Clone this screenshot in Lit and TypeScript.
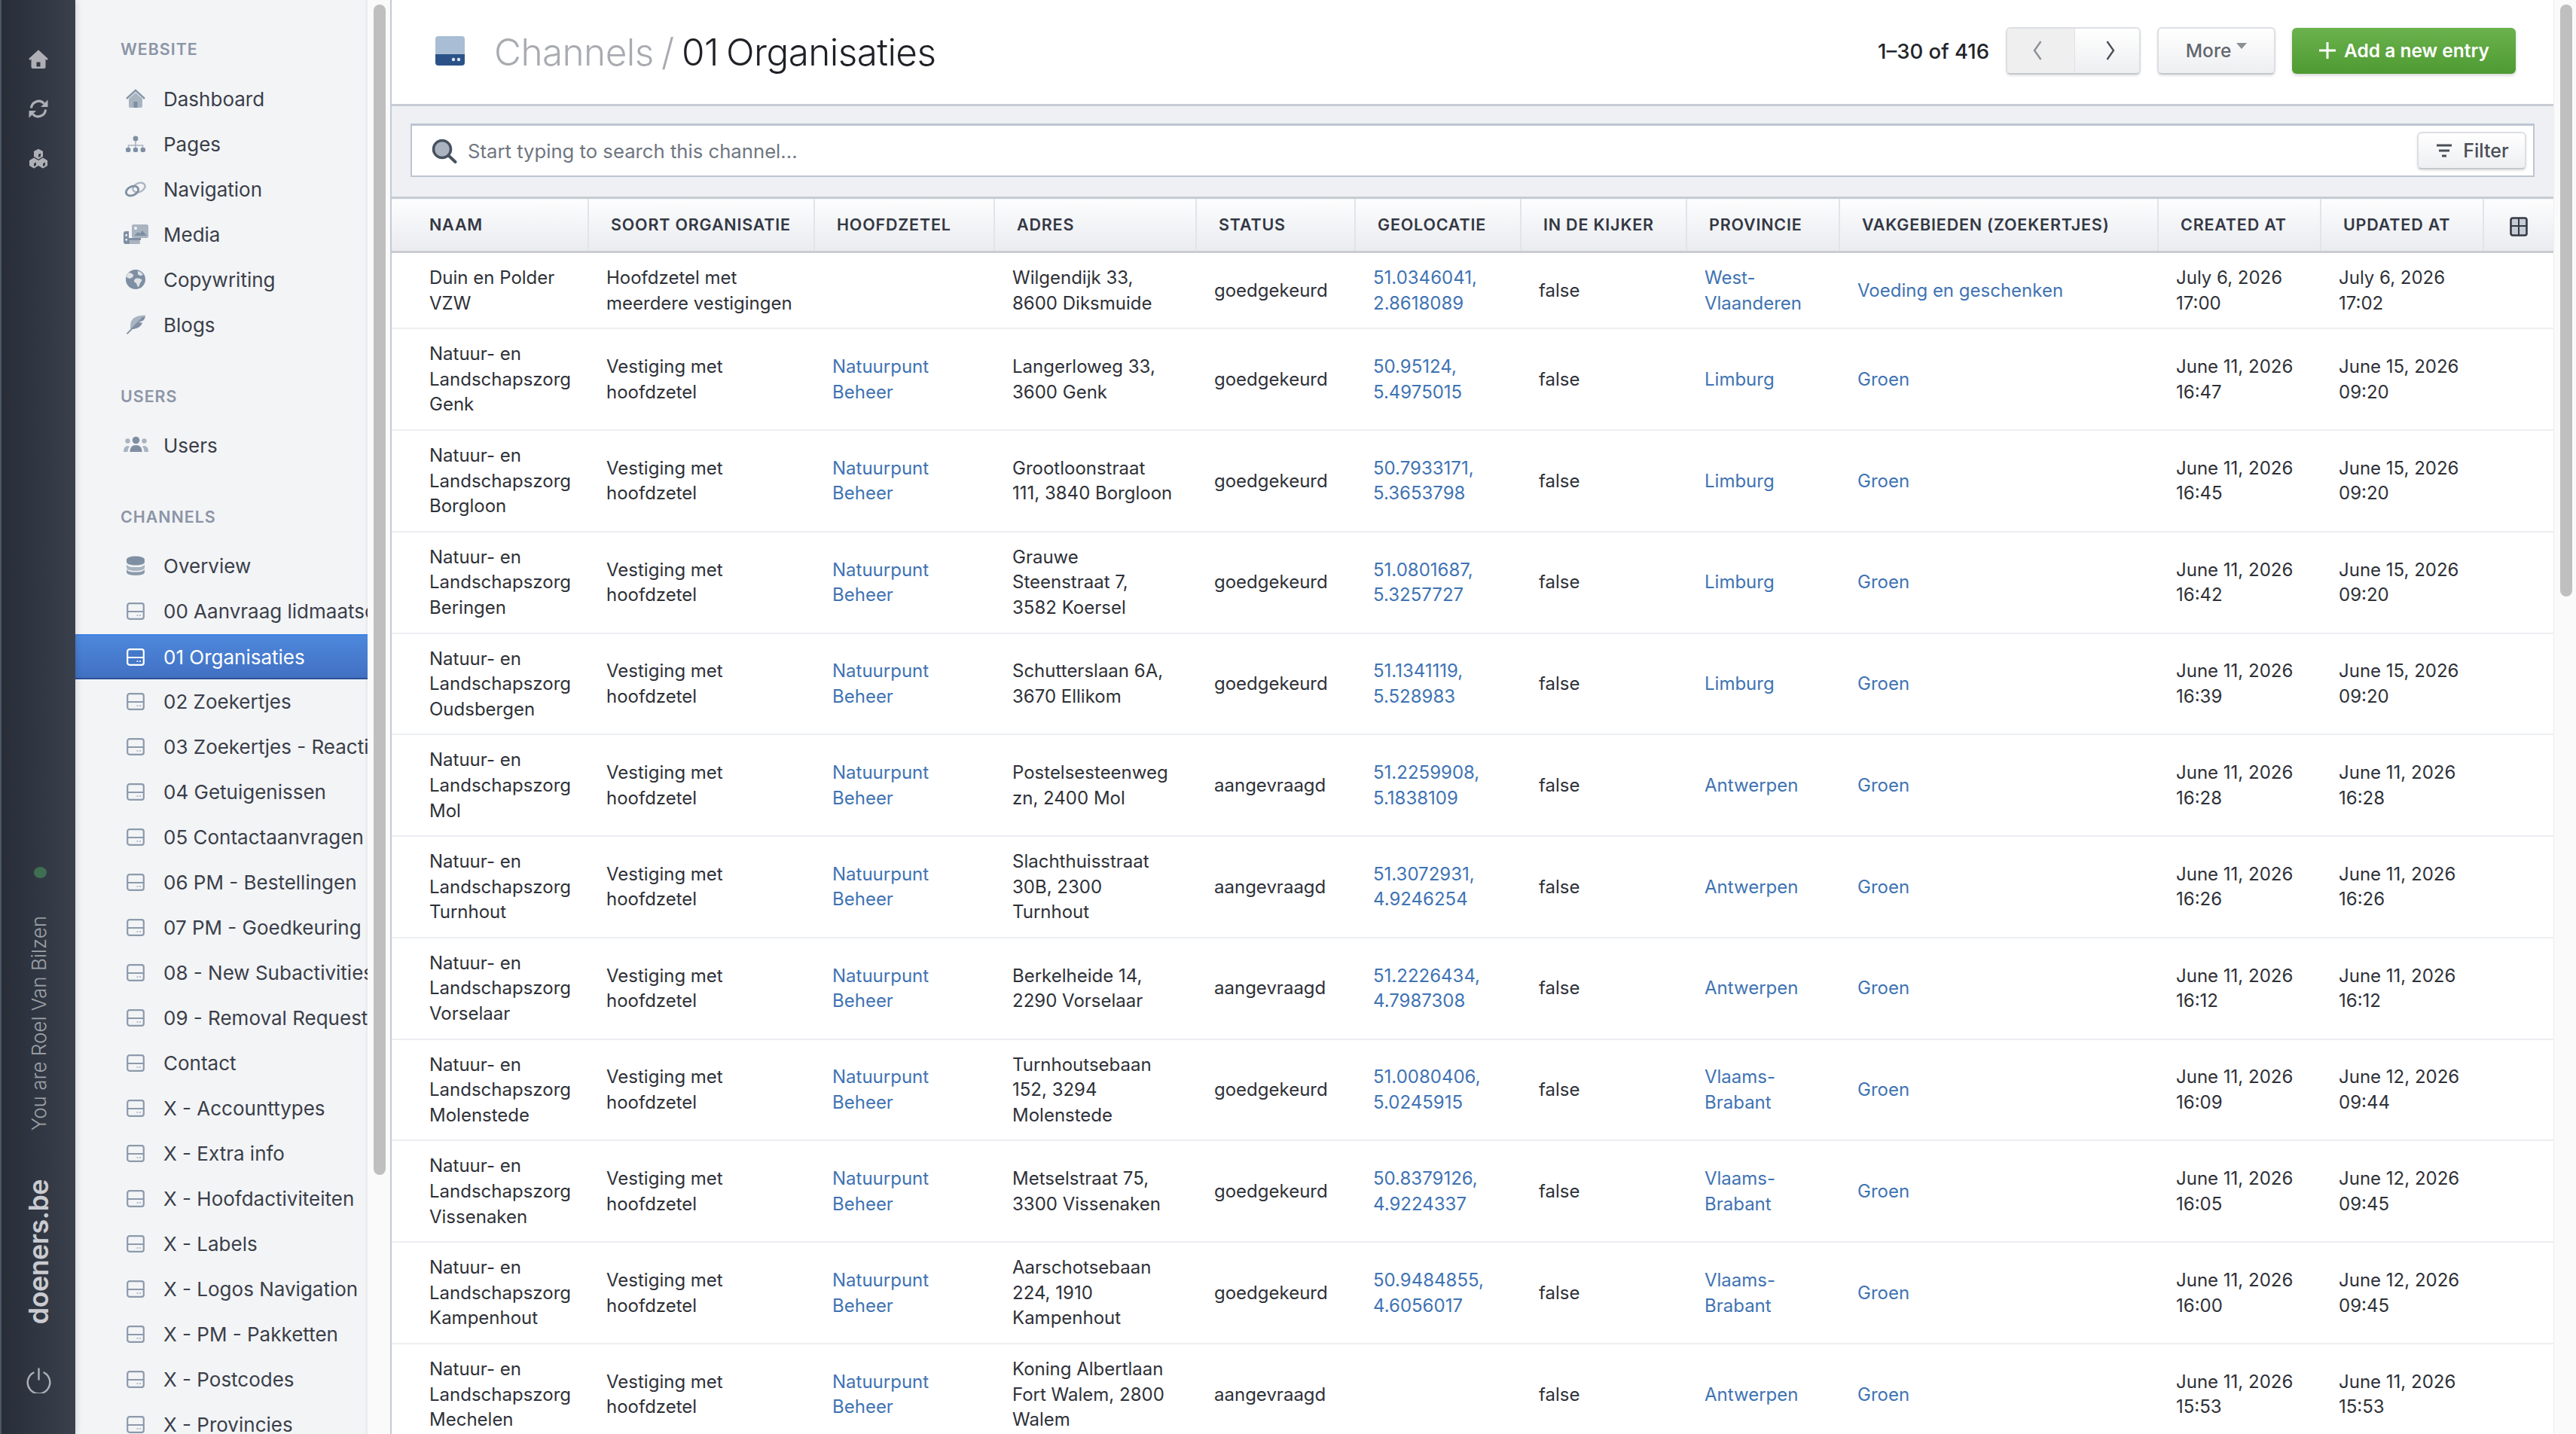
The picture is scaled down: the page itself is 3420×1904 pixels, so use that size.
import { LitElement, html, css } from "lit";
import { customElement } from "lit/decorators.js";

type Row = { name: string; soort: string; hoofd: string; adres: string; status: string; geo: string; prov: string; vak: string; created: string; updated: string };

const NP = "Natuurpunt\nBeheer";
const VM = "Vestiging met\nhoofdzetel";
const L = "Natuur- en\nLandschapszorg\n";
const rows: Row[] = [
  { name: "Duin en Polder\nVZW", soort: "Hoofdzetel met\nmeerdere vestigingen", hoofd: "", adres: "Wilgendijk 33,\n8600 Diksmuide", status: "goedgekeurd", geo: "51.0346041,\n2.8618089", prov: "West-\nVlaanderen", vak: "Voeding en geschenken", created: "July 6, 2026\n17:00", updated: "July 6, 2026\n17:02" },
  { name: L + "Genk", soort: VM, hoofd: NP, adres: "Langerloweg 33,\n3600 Genk", status: "goedgekeurd", geo: "50.95124,\n5.4975015", prov: "Limburg", vak: "Groen", created: "June 11, 2026\n16:47", updated: "June 15, 2026\n09:20" },
  { name: L + "Borgloon", soort: VM, hoofd: NP, adres: "Grootloonstraat\n111, 3840 Borgloon", status: "goedgekeurd", geo: "50.7933171,\n5.3653798", prov: "Limburg", vak: "Groen", created: "June 11, 2026\n16:45", updated: "June 15, 2026\n09:20" },
  { name: L + "Beringen", soort: VM, hoofd: NP, adres: "Grauwe\nSteenstraat 7,\n3582 Koersel", status: "goedgekeurd", geo: "51.0801687,\n5.3257727", prov: "Limburg", vak: "Groen", created: "June 11, 2026\n16:42", updated: "June 15, 2026\n09:20" },
  { name: L + "Oudsbergen", soort: VM, hoofd: NP, adres: "Schutterslaan 6A,\n3670 Ellikom", status: "goedgekeurd", geo: "51.1341119,\n5.528983", prov: "Limburg", vak: "Groen", created: "June 11, 2026\n16:39", updated: "June 15, 2026\n09:20" },
  { name: L + "Mol", soort: VM, hoofd: NP, adres: "Postelsesteenweg\nzn, 2400 Mol", status: "aangevraagd", geo: "51.2259908,\n5.1838109", prov: "Antwerpen", vak: "Groen", created: "June 11, 2026\n16:28", updated: "June 11, 2026\n16:28" },
  { name: L + "Turnhout", soort: VM, hoofd: NP, adres: "Slachthuisstraat\n30B, 2300\nTurnhout", status: "aangevraagd", geo: "51.3072931,\n4.9246254", prov: "Antwerpen", vak: "Groen", created: "June 11, 2026\n16:26", updated: "June 11, 2026\n16:26" },
  { name: L + "Vorselaar", soort: VM, hoofd: NP, adres: "Berkelheide 14,\n2290 Vorselaar", status: "aangevraagd", geo: "51.2226434,\n4.7987308", prov: "Antwerpen", vak: "Groen", created: "June 11, 2026\n16:12", updated: "June 11, 2026\n16:12" },
  { name: L + "Molenstede", soort: VM, hoofd: NP, adres: "Turnhoutsebaan\n152, 3294\nMolenstede", status: "goedgekeurd", geo: "51.0080406,\n5.0245915", prov: "Vlaams-\nBrabant", vak: "Groen", created: "June 11, 2026\n16:09", updated: "June 12, 2026\n09:44" },
  { name: L + "Vissenaken", soort: VM, hoofd: NP, adres: "Metselstraat 75,\n3300 Vissenaken", status: "goedgekeurd", geo: "50.8379126,\n4.9224337", prov: "Vlaams-\nBrabant", vak: "Groen", created: "June 11, 2026\n16:05", updated: "June 12, 2026\n09:45" },
  { name: L + "Kampenhout", soort: VM, hoofd: NP, adres: "Aarschotsebaan\n224, 1910\nKampenhout", status: "goedgekeurd", geo: "50.9484855,\n4.6056017", prov: "Vlaams-\nBrabant", vak: "Groen", created: "June 11, 2026\n16:00", updated: "June 12, 2026\n09:45" },
  { name: L + "Mechelen", soort: VM, hoofd: NP, adres: "Koning Albertlaan\nFort Walem, 2800\nWalem", status: "aangevraagd", geo: "", prov: "Antwerpen", vak: "Groen", created: "June 11, 2026\n15:53", updated: "June 11, 2026\n15:53" },
];

const heads = ["Naam", "Soort organisatie", "Hoofdzetel", "Adres", "Status", "Geolocatie", "In de kijker", "Provincie", "Vakgebieden (zoekertjes)", "Created at", "Updated at"];
const widths = [261, 300, 239, 268, 211, 220, 220, 203, 423, 216, 216, 93];

const websiteIcons: Record<string, unknown> = {
  Dashboard: html`<svg class="ic" viewBox="0 0 26 26"><path fill="#a9b4c1" d="M13 5 4 13v10a2 2 0 0 0 2 2h14a2 2 0 0 0 2-2V13z"/><path fill="none" stroke="#8796a8" stroke-width="2.4" d="M1 13 13 2l12 11"/><rect x="10.5" y="17" width="5" height="8" fill="#7f8ea1"/></svg>`,
  Pages: html`<svg class="ic" viewBox="0 0 26 26"><circle cx="13" cy="6" r="3.4" fill="#7f8fa3"/><path fill="none" stroke="#a9b4c1" stroke-width="1.6" d="M3.5 19v-4h19v4M13 9v10"/><rect y="18" width="6.4" height="6" rx="2" fill="#7f8fa3"/><rect x="9.8" y="18" width="6.4" height="6" rx="2" fill="#7f8fa3"/><rect x="19.6" y="18" width="6.4" height="6" rx="2" fill="#7f8fa3"/></svg>`,
  Navigation: html`<svg class="ic wide" viewBox="0 0 30 26"><ellipse cx="19.5" cy="11" rx="8.5" ry="5.8" transform="rotate(-25 19.5 11)" fill="none" stroke="#aab5c2" stroke-width="2.4"/><ellipse cx="10.5" cy="15.5" rx="8.5" ry="5.8" transform="rotate(-25 10.5 15.5)" fill="none" stroke="#7f8fa3" stroke-width="2.8"/></svg>`,
  Media: html`<svg class="ic wider" viewBox="0 0 33 26"><rect x="11" y="0" width="22" height="18" rx="2.5" fill="#a9b4c1"/><circle cx="16" cy="5" r="2" fill="#f3f4f6"/><path fill="#7f8fa3" d="m14 15 5-5 3 2 3-4 6 7z"/><path fill="#7f8fa3" d="M3 9h4v9h16v3H8v5H3a3 3 0 0 1-3-3V12a3 3 0 0 1 3-3z"/><rect x="8" y="21" width="14" height="5" rx="1.5" fill="#a9b4c1"/><rect x="2.5" y="13" width="2.5" height="2.5" fill="#f3f4f6"/><rect x="2.5" y="19" width="2.5" height="2.5" fill="#f3f4f6"/></svg>`,
  Copywriting: html`<svg class="ic" viewBox="0 0 26 26"><circle cx="13" cy="13" r="13" fill="#7f8fa3"/><path fill="#dfe3e8" d="M4 4c3 0 4 1 5 2 2 1 1 3 0 4-2 1-3 2-4 2L1 10c0-2 1-4 3-6zM13 12c3-1 6 0 8 1 1 2-1 3-2 5l-2 5c-2 0-2-3-3-5-1-1-3-1-3-3s1-2 2-3zM16 2c3 0 6 3 7 5l-3 1c-2 0-3-1-4-2z"/></svg>`,
  Blogs: html`<svg class="ic" viewBox="0 0 26 26"><path fill="#a9b4c1" d="M25.5.5C15 .5 8 4 6.5 11l-.6 7.5 7.1-.5c4 0 7.500-3 9-7l-5.500-.5 7-3c1.500-2.500 2.500-5 2.500-7.500z"/><path fill="#7f8fa3" d="M22 3 1 24.500 2 26l7-7c1-.1 3-.2 4-.8 4-1 7-4 9-7.700l-5.500-.5 7-3c1-1.500 2-3 2.300-4.500z"/></svg>`,
  Users: html`<svg class="ic wider" viewBox="0 0 33 24"><circle cx="5.500" cy="6.500" r="3.200" fill="#a9b4c1"/><circle cx="27.500" cy="6.500" r="3.200" fill="#a9b4c1"/><path fill="#a9b4c1" d="M0 21c0-5 2-8 6-8l2 1c-2 2-2.500 5-2.500 7zM33 21c0-5-2-8-6-8l-2 1c2 2 2.500 5 2.500 7z"/><circle cx="16.500" cy="5.500" r="4.800" fill="#7f8fa3"/><path fill="#7f8fa3" d="M8.500 21c0-6 3-9 8-9s8 3 8 9z"/></svg>`,
  Overview: html`<svg class="ic" viewBox="0 0 26 26"><ellipse cx="13" cy="5" rx="12" ry="4.500" fill="#7f8fa3"/><path fill="#7f8fa3" d="M1 5v3c0 3 5 4.500 12 4.500S25 11 25 8V5c-2 3-6 4-12 4S3 8 1 5z"/><path fill="#a9b4c1" d="M1 11.500v4c0 3 5 4.500 12 4.500s12-1.500 12-4.500v-4c-2 3-6 3.500-12 3.500S3 14.500 1 11.500z"/><path fill="#8a99ab" d="M1 18v3.500C1 24.500 6 26 13 26s12-1.500 12-4.500V18c-2 3-6 3.500-12 3.500S3 21 1 18z"/></svg>`,
};

const channelIcon = (active: boolean) => html`<svg class="ic chan" viewBox="0 0 24 23">
  <rect x="1.200" y="1.200" width="21.600" height="20.600" rx="2.800" fill=${active ? "#4478c8" : "none"} stroke=${active ? "#fff" : "#8c9aac"} stroke-width="2.200"/>
  <path d="M1.500 12h21" stroke=${active ? "#fff" : "#8c9aac"} stroke-width="2"/>
  ${active ? html`<rect x="2.400" y="13" width="19.200" height="7.600" fill="#2a4f94"/>` : ""}
  <circle cx="14.500" cy="17" r="1.100" fill=${active ? "#fff" : "#a9b4c1"}/><circle cx="18" cy="17" r="1.100" fill=${active ? "#fff" : "#a9b4c1"}/>
</svg>`;

const channels = ["00 Aanvraag lidmaatschap", "01 Organisaties", "02 Zoekertjes", "03 Zoekertjes - Reacties", "04 Getuigenissen", "05 Contactaanvragen", "06 PM - Bestellingen", "07 PM - Goedkeuring aanvragen", "08 - New Subactivities", "09 - Removal Requests", "Contact", "X - Accounttypes", "X - Extra info", "X - Hoofdactiviteiten", "X - Labels", "X - Logos Navigation", "X - PM - Pakketten", "X - Postcodes", "X - Provincies"];

@customElement("app-root")
export class AppRoot extends LitElement {
  static styles = css`
    :host { display: flex; width: 3420px; height: 1904px; overflow: hidden; background: #fff; font-family: Inter, "Noto Sans", sans-serif; color: #2b2e35; }
    * { box-sizing: border-box; }
    .rail { width: 100px; height: 1904px; flex: none; display: flex; flex-direction: column; align-items: center; padding: 65px 0 54px; background: linear-gradient(90deg, #282d38, #3a414c); border-left: 2px solid #4e5766; color: #aeb0b6; box-shadow: 2px 0 8px rgba(0,0,0,.12); position: relative; z-index: 2; }
    .rail-ic { width: 26px; height: 27px; margin-bottom: 39px; display: block; }
    .spacer { flex: 1; }
    .dot { width: 17px; height: 15px; border-radius: 50%; background: #3f6f52; margin-left: 4px; flex: none; }
    .vert { writing-mode: vertical-rl; transform: rotate(180deg); white-space: nowrap; flex: none; }
    .you { font-size: 26px; font-weight: 300; color: #9ea2a9; margin-top: 50px; }
    .brand { font-size: 35.800px; font-weight: 600; color: #c9cbd0; margin-top: 65px; letter-spacing: -.5px; }
    .power { width: 33px; height: 34px; margin-top: 58px; flex: none; }

    .side { width: 388px; height: 1904px; flex: none; background: #f3f4f6; overflow: hidden; padding-top: 50px; box-shadow: inset -4px 0 3px -2px #e6e8eb; }
    .h { font-size: 21.400px; line-height: 30px; font-weight: 600; letter-spacing: 1px; color: #8b95a7; padding-left: 60px; margin: 49px 0 21px; text-transform: uppercase; }
    .h.first { margin-top: 0; margin-bottom: 22px; }
    .item { height: 60px; display: flex; align-items: center; white-space: nowrap; overflow: hidden; font-size: 26px; color: #3a3f4a; padding-bottom: 2px; }
    .item .slot { width: 117px; padding: 0 17px 0 60px; flex: none; display: flex; justify-content: center; }
    .item.on { background: linear-gradient(180deg, #4d88dc, #4270c2); border-top: 2px solid #3f83e4; border-bottom: 2px solid #2a4f94; color: #fff; padding-bottom: 0; }
    .ic { width: 26px; height: 26px; flex: none; display: block; }
    .ic.wide { width: 30px; }
    .ic.wider { width: 33px; }
    .ic.chan { width: 24px; height: 23px; }

    .track { width: 30px; flex: none; height: 1904px; background: #fafafa; padding: 6px 6px 0 8px; }
    .thumb { width: 16px; background: #bfbfbf; border-radius: 8px; }
    .track.s .thumb { height: 1554px; }
    .track.m { border-left: 1px solid #eceef0; }
    .track.m .thumb { height: 786px; }

    .main { width: 2872px; flex: none; height: 1904px; border-left: 2px solid #c3cad6; overflow: hidden; display: flex; flex-direction: column; }
    .top { height: 141px; flex: none; border-bottom: 3px solid #c7ccd4; display: flex; align-items: center; padding: 0 50px 4px 58px; }
    .logo { width: 39px; height: 39px; margin-right: 39px; flex: none; }
    .title { font-size: 49.500px; font-weight: 300; letter-spacing: -.6px; word-spacing: -3px; color: #a8abb0; flex: 1; white-space: nowrap; padding-top: 4px; }
    .title b { font-weight: 300; color: #1e2026; }
    .count { font-size: 27.500px; font-weight: 500; color: #22252b; margin-right: 22px; white-space: nowrap; padding-top: 1px; }
    .btn { height: 63px; display: flex; align-items: center; justify-content: center; border: 2px solid #dcdfe3; border-bottom-color: #c4c8ce; border-radius: 6px; background: linear-gradient(180deg, #fff, #eeeff1); box-shadow: 0 2px 3px rgba(0,0,0,.1); font-size: 24.500px; font-weight: 500; color: #62666e; white-space: nowrap; }
    .pager { width: 179px; padding: 0; overflow: hidden; align-items: stretch; margin-right: 22px; }
    .pager span { flex: 1; display: flex; align-items: center; justify-content: center; padding-left: 8px; border-left: 1px solid #dfe1e4; }
    .pager .off { background: #efefef; flex: none; width: 89px; color: #8b8f96; padding: 0 10px 0 0; border-left: none; }
    .pager svg { width: 12px; height: 26px; }
    .more { width: 157px; margin-right: 22px; gap: 7px; }
    .caret { width: 0; height: 0; border-left: 7px solid transparent; border-right: 7px solid transparent; border-top: 8px solid #8a8e95; margin-top: -12px; }
    .add { width: 297px; height: 61px; border: none; background: linear-gradient(180deg, #6ab24d, #4f9a32); color: #fff; font-weight: 600; gap: 10px; box-shadow: 0 2px 4px rgba(0,0,0,.18); }
    .add svg { width: 24px; height: 24px; }

    .searchbar { height: 120px; flex: none; background: #eef0f4; padding: 23px 25px 26px; }
    .box { height: 71px; background: #fff; border: 2px solid #bdc5d1; border-top-width: 3px; display: flex; align-items: center; padding: 0 9px 0 26px; }
    .box .mag { width: 34px; height: 33px; margin-right: 14px; flex: none; }
    .ph { flex: 1; font-size: 25.700px; color: #6f7680; white-space: nowrap; }
    .filter { width: 145px; height: 50px; gap: 14px; font-size: 25px; color: #4a4e56; padding-left: 2px; }
    .filter svg { width: 22px; height: 18px; }

    table { border-collapse: collapse; table-layout: fixed; width: 2870px; flex: none; }
    th { height: 72px; padding: 0 0 2px 29px; text-align: left; font-size: 21.500px; font-weight: 600; letter-spacing: .8px; text-transform: uppercase; color: #333844; background: linear-gradient(180deg, #fdfdfe, #e9ebef); border-top: 3px solid #c7ccd4; border-bottom: 3px solid #c9ccd1; border-left: 2px solid #e2e4e8; white-space: nowrap; overflow: hidden; }
    th:first-child { border-left: none; padding-left: 50px; }
    th svg { width: 24px; height: 26px; display: block; margin-top: 6px; margin-left: 5px; }
    td { padding: 16px 0 16px 24px; font-size: 24px; line-height: 33.600px; font-weight: 400; color: #2e3138; white-space: pre; border-bottom: 2px solid #eceef1; vertical-align: middle; }
    td:first-child { padding-left: 50px; }
    td.l { color: #3f73b3; }
  `;

  private item(label: string, icon: unknown, on = false) {
    return html`<div class="item ${on ? "on" : ""}"><span class="slot">${icon}</span>${label}</div>`;
  }

  render() {
    return html`
      <nav class="rail">
        <svg class="rail-ic" viewBox="0 0 26 26"><path fill="currentColor" d="M13 .8 25.800 12.500 24.300 14.600 22.500 13V23a2.500 2.500 0 0 1-2.500 2.500H6A2.500 2.500 0 0 1 3.500 23V13L1.700 14.600.2 12.500z"/><rect x="10.500" y="17" width="5" height="6" fill="#323843"/></svg>
        <svg class="rail-ic" viewBox="0 0 26 26"><path fill="none" stroke="currentColor" stroke-width="3.200" d="M3.500 12a9.800 9.800 0 0 1 17-6M22.500 14a9.800 9.800 0 0 1-17 6"/><path fill="currentColor" d="M25.500 1v9.500H16zM.5 25v-9.500H10z"/></svg>
        <svg class="rail-ic" viewBox="0 0 26 26"><g fill="currentColor" stroke="currentColor" stroke-width="2" stroke-linejoin="round"><path d="M13 1.500 18 4v6l-5 3-5-3V4z"/><path d="M7 13l5 3v6l-5 3-5-3v-6z"/><path d="M19 13l5 3v6l-5 3-5-3v-6z"/></g><path fill="#333945" d="M13 7.500 16 6v4l-3 1.500zM7 19.500l3-1.500v4l-3 1.500zM19 19.500l3-1.500v4l-3 1.500z"/></svg>
        <div class="spacer"></div>
        <div class="dot"></div>
        <div class="vert you">You are Roel Van Bilzen</div>
        <div class="vert brand">doeners.be</div>
        <svg class="power" viewBox="0 0 33 34"><path fill="none" stroke="currentColor" stroke-width="2.400" stroke-linecap="round" d="M9.500 6.500a14.800 14.800 0 1 0 14 0M16.500 1.500v14"/></svg>
      </nav>

      <aside class="side">
        <div class="h first">Website</div>
        ${Object.keys(websiteIcons).slice(0, 6).map((k) => this.item(k, websiteIcons[k]))}
        <div class="h">Users</div>
        ${this.item("Users", websiteIcons.Users)}
        <div class="h">Channels</div>
        ${this.item("Overview", websiteIcons.Overview)}
        ${channels.map((c) => this.item(c, channelIcon(c === "01 Organisaties"), c === "01 Organisaties"))}
      </aside>
      <div class="track s"><div class="thumb"></div></div>

      <main class="main">
        <header class="top">
          <svg class="logo" viewBox="0 0 39 39"><path fill="#a9bdd4" d="M4 0h31a4 4 0 0 1 4 4v20H0V4a4 4 0 0 1 4-4z"/><path fill="#2a5288" d="M0 24h39v11a4 4 0 0 1-4 4H4a4 4 0 0 1-4-4z"/><circle cx="24" cy="31" r="2.200" fill="#dfe6ef"/><circle cx="31" cy="31" r="2.200" fill="#dfe6ef"/></svg>
          <div class="title">Channels / <b>01 Organisaties</b></div>
          <div class="count">1–30 of 416</div>
          <div class="btn pager">
            <span class="off"><svg viewBox="0 0 12 26"><path fill="none" stroke="currentColor" stroke-width="2.400" d="M10.500 1 2 13l8.500 12"/></svg></span>
            <span><svg viewBox="0 0 12 26"><path fill="none" stroke="#4c5058" stroke-width="2.400" d="M1.500 1 10 13 1.500 25"/></svg></span>
          </div>
          <div class="btn more">More<span class="caret"></span></div>
          <div class="btn add"><svg viewBox="0 0 24 24"><path stroke="#fff" stroke-width="3" d="M12 1v22M1 12h22"/></svg>Add a new entry</div>
        </header>

        <div class="searchbar">
          <div class="box">
            <svg class="mag" viewBox="0 0 34 33"><circle cx="14" cy="14" r="11.500" fill="#aab3bf" stroke="#47525f" stroke-width="3.500"/><path stroke="#47525f" stroke-width="4" stroke-linecap="round" d="m23 23 8.500 8"/></svg>
            <div class="ph">Start typing to search this channel...</div>
            <div class="btn filter"><svg viewBox="0 0 22 18"><path stroke="#4a4e56" stroke-width="3" d="M1 2h20M4 9h14M8 16h6"/></svg>Filter</div>
          </div>
        </div>

        <table>
          <colgroup>${widths.map((w) => html`<col style="width:${w}px" />`)}</colgroup>
          <thead><tr>
            ${heads.map((h) => html`<th>${h}</th>`)}
            <th><svg viewBox="0 0 24 26"><rect x="1.500" y="1.500" width="21" height="23" rx="2.500" fill="#c6ccd6" stroke="#343945" stroke-width="2.600"/><path stroke="#343945" stroke-width="2" d="M12 2v22M2 12h20"/></svg></th>
          </tr></thead>
          <tbody>
            ${rows.map((r) => html`<tr>
              <td>${r.name}</td><td>${r.soort}</td><td class="l">${r.hoofd}</td><td>${r.adres}</td><td>${r.status}</td>
              <td class="l">${r.geo}</td><td>false</td><td class="l">${r.prov}</td><td class="l">${r.vak}</td>
              <td>${r.created}</td><td>${r.updated}</td><td></td>
            </tr>`)}
          </tbody>
        </table>
      </main>
      <div class="track m"><div class="thumb"></div></div>
    `;
  }
}
